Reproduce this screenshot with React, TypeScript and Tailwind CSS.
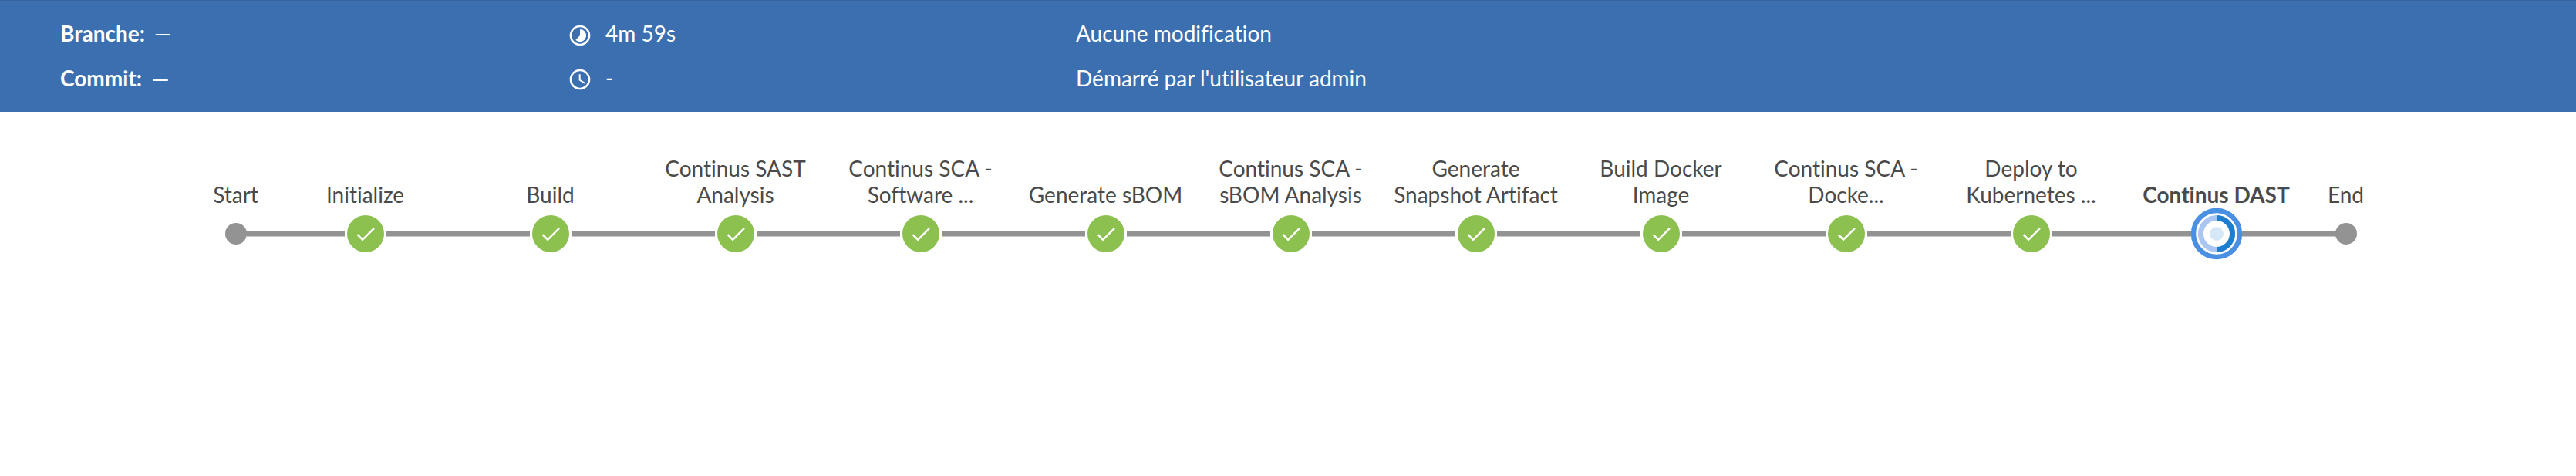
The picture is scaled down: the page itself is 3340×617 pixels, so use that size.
type Stage = { name: string[]; state: "terminal" | "success" | "running" };

const stages: Stage[] = [
  { name: ["Start"], state: "terminal" },
  { name: ["Initialize"], state: "success" },
  { name: ["Build"], state: "success" },
  { name: ["Continus SAST", "Analysis"], state: "success" },
  { name: ["Continus SCA -", "Software ..."], state: "success" },
  { name: ["Generate sBOM"], state: "success" },
  { name: ["Continus SCA -", "sBOM Analysis"], state: "success" },
  { name: ["Generate", "Snapshot Artifact"], state: "success" },
  { name: ["Build Docker", "Image"], state: "success" },
  { name: ["Continus SCA -", "Docke..."], state: "success" },
  { name: ["Deploy to", "Kubernetes ..."], state: "success" },
  { name: ["Continus DAST"], state: "running" },
  { name: ["End"], state: "terminal" },
];

function TimelapseIcon() {
  return (
    <svg viewBox="0 0 24 24" className="size-8 translate-y-[3px]" fill="currentColor">
      <path d="M16.24 7.76C15.07 6.59 13.54 6 12 6v6l-4.24 4.24c2.34 2.34 6.14 2.34 8.49 0 2.34-2.34 2.34-6.14-.01-8.48zM12 2C6.48 2 2 6.48 2 12s4.48 10 10 10 10-4.48 10-10S17.52 2 12 2zm0 18c-4.42 0-8-3.58-8-8s3.58-8 8-8 8 3.58 8 8-3.58 8-8 8z" />
    </svg>
  );
}

function ClockIcon() {
  return (
    <svg viewBox="0 0 24 24" className="size-8 translate-y-[2px]" fill="currentColor">
      <path d="M11.99 2C6.47 2 2 6.48 2 12s4.47 10 9.99 10C17.52 22 22 17.52 22 12S17.52 2 11.99 2zM12 20c-4.42 0-8-3.58-8-8s3.58-8 8-8 8 3.58 8 8-3.58 8-8 8z" />
      <path d="M12.5 7H11v6l5.25 3.15.75-1.23-4.5-2.67z" />
    </svg>
  );
}

function Track({ hidden = false }: { hidden?: boolean }) {
  return (
    <div
      className={
        hidden
          ? "h-2 flex-1"
          : "h-2 flex-1 border-y border-[#c9c9c9] bg-[#949393]"
      }
    />
  );
}

function Node({ state }: { state: Stage["state"] }) {
  if (state === "terminal") {
    return <div className="-mx-px size-7 rounded-full bg-[#949393]" />;
  }
  if (state === "running") {
    return (
      <svg viewBox="-34 -34 68 68" className="-mx-px size-[68px]">
        <circle r="30" fill="#fff" stroke="#4a90e2" strokeWidth="6.4" />
        <circle r="20.5" fill="none" stroke="#a9c6f3" strokeWidth="7" />
        <path d="M0 -20.5A20.5 20.5 0 0 1 0 20.5" fill="none" stroke="#1d7dcf" strokeWidth="7" />
        <circle r="9" fill="#d6e8f6" />
      </svg>
    );
  }
  return (
    <div className="size-[54px] rounded-full bg-white p-[3px]">
      <svg viewBox="-12 -12 24 24" className="size-12">
        <circle r="12" fill="#8cc04f" />
        <path d="M-1.95 2.95L-4.75 .15 -5.65 1.05 -1.95 4.75 5.95 -3.15 5.05 -4.05z" fill="#fff" />
      </svg>
    </div>
  );
}

export default function App() {
  return (
    <div className="min-h-[617px] w-[3340px] bg-white font-[Lato,sans-serif] text-[28px] [font-variant-ligatures:none]">
      <header className="grid h-[145px] grid-cols-[658px_659px_1fr] grid-rows-[58px_58px] border-t border-[#3864a0] bg-[#3b6fb0] pt-[13px] pl-[78px] text-white">
        <div className="flex items-center gap-3">
          <span className="font-bold">Branche:</span>
          <span>—</span>
        </div>
        <div className="flex items-center gap-[17px]">
          <TimelapseIcon />
          <span>4m 59s</span>
        </div>
        <div className="flex items-center">Aucune modification</div>
        <div className="flex items-center gap-[13px] font-bold">
          <span>Commit:</span>
          <span>—</span>
        </div>
        <div className="flex items-center gap-[17px]">
          <ClockIcon />
          <span>-</span>
        </div>
        <div className="flex items-center">Démarré par l'utilisateur admin</div>
      </header>

      <main className="flex pt-[58px] pl-[258px] text-[#4a4a4a]">
        {stages.map((stage, i) => (
          <div
            key={i}
            className={stage.state === "terminal" ? "w-24" : "w-60"}
          >
            <div
              className={
                stage.state === "running"
                  ? "flex h-[66px] flex-col justify-end pr-px text-center leading-[34px] font-bold"
                  : "flex h-[66px] flex-col justify-end pr-px text-center leading-[34px]"
              }
            >
              {stage.name.map((line) => (
                <div key={line} className="whitespace-nowrap">{line}</div>
              ))}
            </div>
            <div className="flex h-[68px] items-center">
              <Track hidden={i === 0} />
              <Node state={stage.state} />
              <Track hidden={i === stages.length - 1} />
            </div>
          </div>
        ))}
      </main>
    </div>
  );
}
